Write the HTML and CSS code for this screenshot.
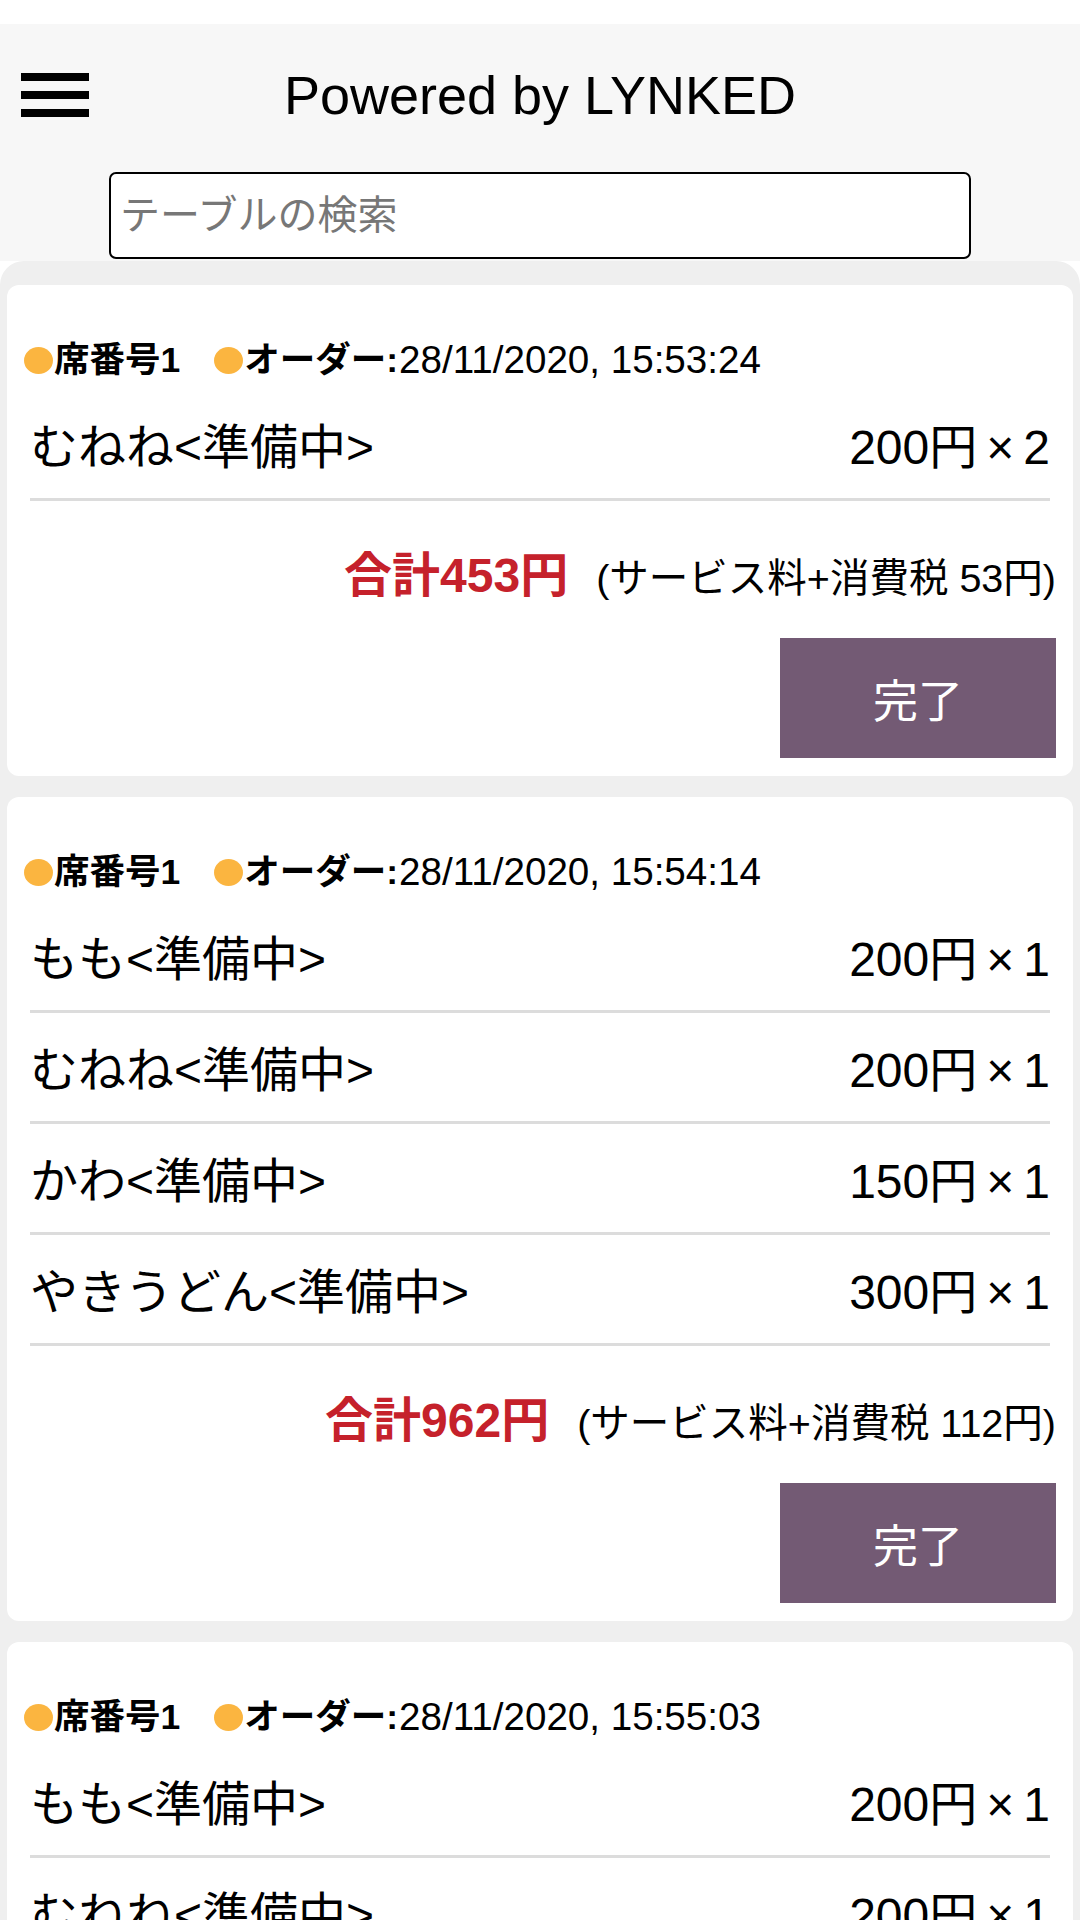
FILE: index.html
```html
<!DOCTYPE html>
<html lang="ja">
<head>
<meta charset="utf-8">
<title>Orders</title>
<link rel="stylesheet" href="styles.css">
</head>
<body>
<div class="statusbar"></div>
<header class="header">
  <div class="toprow">
    <div class="menu" aria-label="menu"><span></span><span></span><span></span></div>
    <h1 class="title">Powered by LYNKED</h1>
    <div></div>
  </div>
  <div class="searchwrap">
    <input class="search" type="text" placeholder="テーブルの検索">
  </div>
</header>
<main class="content">
  <section class="card">
    <div class="meta">
      <span class="dot"></span><b class="label">席番号1</b>
      <span class="dot dot2"></span><b class="label">オーダー:</b><span class="date">28/11/2020, 15:53:24</span>
    </div>
    <div class="item"><span>むねね&lt;準備中&gt;</span><span>200円<span class="x">×</span>2</span></div>
    <div class="total"><span class="sum">合計453円</span><span class="tax">(サービス料+消費税 53円)</span></div>
    <button class="done">完了</button>
  </section>
  <section class="card">
    <div class="meta">
      <span class="dot"></span><b class="label">席番号1</b>
      <span class="dot dot2"></span><b class="label">オーダー:</b><span class="date">28/11/2020, 15:54:14</span>
    </div>
    <div class="item"><span>もも&lt;準備中&gt;</span><span>200円<span class="x">×</span>1</span></div>
    <div class="item"><span>むねね&lt;準備中&gt;</span><span>200円<span class="x">×</span>1</span></div>
    <div class="item"><span>かわ&lt;準備中&gt;</span><span>150円<span class="x">×</span>1</span></div>
    <div class="item"><span>やきうどん&lt;準備中&gt;</span><span>300円<span class="x">×</span>1</span></div>
    <div class="total"><span class="sum">合計962円</span><span class="tax">(サービス料+消費税 112円)</span></div>
    <button class="done">完了</button>
  </section>
  <section class="card">
    <div class="meta">
      <span class="dot"></span><b class="label">席番号1</b>
      <span class="dot dot2"></span><b class="label">オーダー:</b><span class="date">28/11/2020, 15:55:03</span>
    </div>
    <div class="item"><span>もも&lt;準備中&gt;</span><span>200円<span class="x">×</span>1</span></div>
    <div class="item"><span>むねね&lt;準備中&gt;</span><span>200円<span class="x">×</span>1</span></div>
    <div class="total"><span class="sum">合計453円</span><span class="tax">(サービス料+消費税 53円)</span></div>
    <button class="done">完了</button>
  </section>
</main>
</body>
</html>
```

FILE: styles.css
```css
* { box-sizing: border-box; }
html, body {
  margin: 0;
  padding: 0;
  background: #ffffff;
  font-family: "Liberation Sans", "Noto Sans CJK JP", sans-serif;
  color: #000;
}
.statusbar { height: 24px; background: #ffffff; }
.header {
  background: #f7f7f7;
  padding: 40px 0 2px;
}
.toprow {
  display: grid;
  grid-template-columns: 1fr auto 1fr;
  align-items: center;
  height: 62px;
}
.menu {
  display: flex;
  flex-direction: column;
  gap: 10px;
  width: 68px;
  margin-left: 21px;
}
.menu span {
  display: block;
  height: 8px;
  background: #000;
}
.title {
  margin: 0;
  font-size: 54px;
  font-weight: normal;
  line-height: 62px;
  white-space: nowrap;
}
.searchwrap {
  display: flex;
  justify-content: center;
  margin-top: 46px;
}
.search {
  width: 862px;
  height: 87px;
  border: 2px solid #000;
  border-radius: 7px;
  background: #fff;
  padding: 0 9px;
  font-family: "Liberation Sans", "Noto Sans CJK JP", sans-serif;
  font-size: 40px;
  outline: none;
}
.search::placeholder { color: #777777; }
.content {
  background: #efefef;
  border-radius: 24px 24px 0 0;
  padding: 24px 7px 24px;
  display: flex;
  flex-direction: column;
  gap: 21px;
}
.card {
  background: #fff;
  border-radius: 12px;
  padding: 55px 17px 18px 23px;
  display: flex;
  flex-direction: column;
}
.meta {
  display: flex;
  align-items: center;
  height: 40px;
  margin-left: -6px;
  margin-bottom: 10px;
  white-space: nowrap;
}
.dot {
  display: inline-block;
  width: 29px;
  height: 27px;
  border-radius: 50%;
  background: #fbb540;
  margin-right: 1px;
}
.dot2 { margin-left: 34px; }
.label {
  font-size: 35.5px;
  font-weight: bold;
  line-height: 40px;
}
.date {
  font-size: 38.6px;
  line-height: 40px;
  margin-left: 1px;
}
.item {
  display: flex;
  justify-content: space-between;
  font-size: 48px;
  line-height: 50px;
  padding: 33px 0 25px;
  margin-right: 6px;
  border-bottom: 3px solid #dcdcdc;
  white-space: nowrap;
}
.x { margin: 0 9px; }
.total {
  display: flex;
  justify-content: flex-end;
  align-items: baseline;
  margin-top: 47px;
  line-height: 56px;
  white-space: nowrap;
}
.sum {
  color: #c5212b;
  font-weight: bold;
  font-size: 48px;
}
.tax {
  font-size: 39.5px;
  margin-left: 28px;
}
.done {
  align-self: flex-end;
  margin-top: 32px;
  width: 276px;
  height: 120px;
  border: none;
  background: #735a74;
  color: #fff;
  font-family: "Liberation Sans", "Noto Sans CJK JP", sans-serif;
  font-size: 45px;
  padding: 0;
}
```
